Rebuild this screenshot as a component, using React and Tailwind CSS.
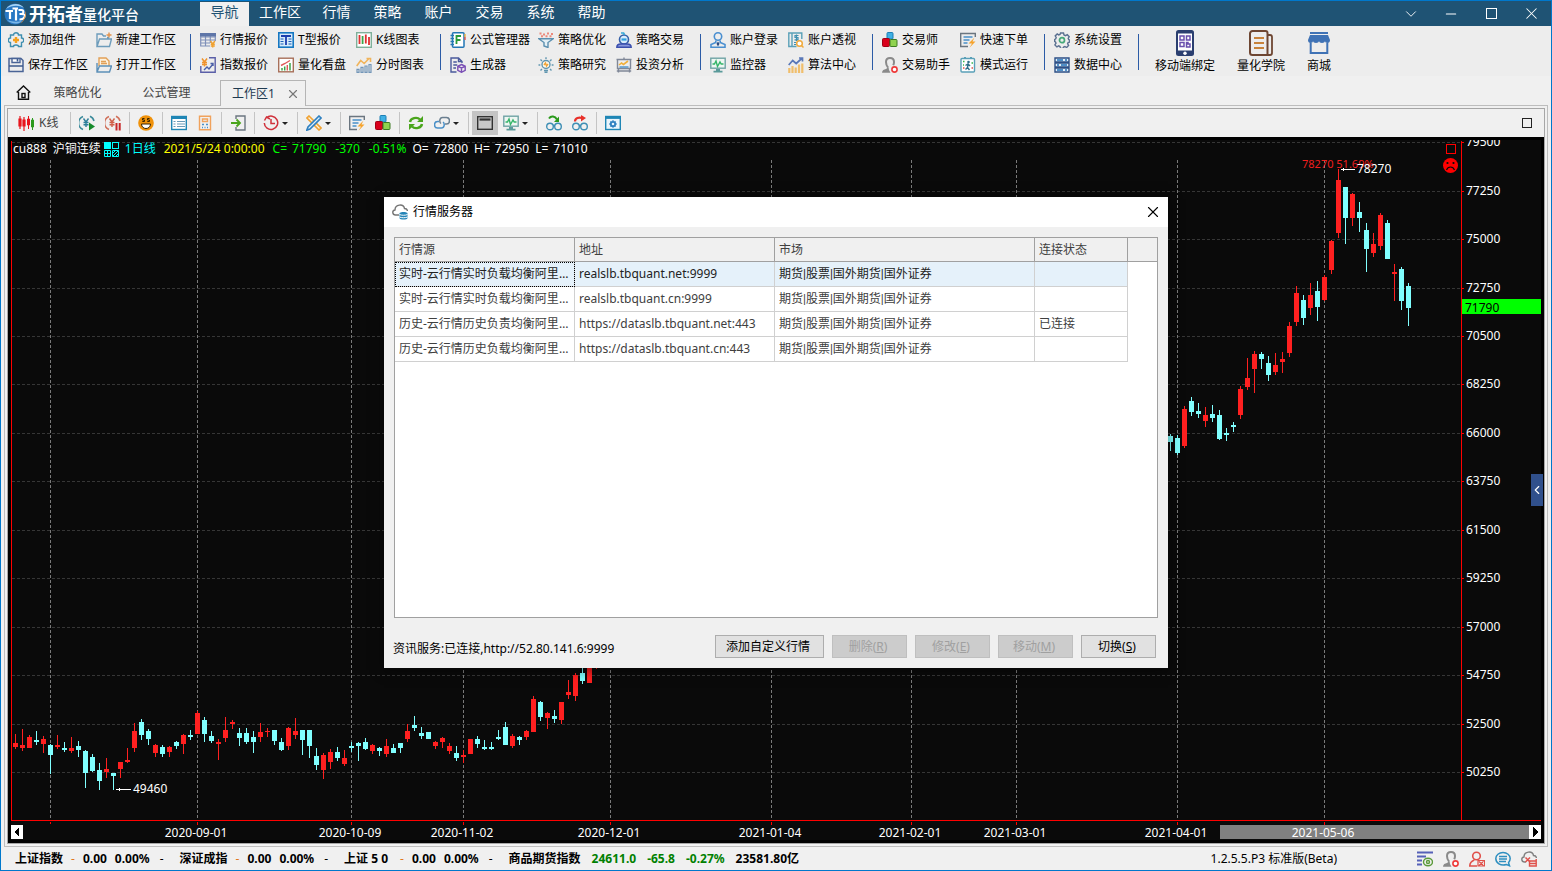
import { useState } from "react";
import { ChevronDown, ChevronLeft, Minus, X } from "lucide-react";

function Svg({ children, size = "h-4 w-4", box = "0 0 16 16" }) {
  return (
    <svg viewBox={box} className={`${size} shrink-0`} fill="none" strokeWidth="1.4" aria-hidden="true">
      {children}
    </svg>
  );
}

const blocks = (
  <>
    <rect x="5" y="0.5" width="6" height="6.5" rx="1" fill="#3fb0e4" stroke="#1d7fb5" strokeWidth="1" />
    <rect x="0.5" y="6.5" width="7" height="8" rx="1" fill="#d9001b" stroke="#a00014" strokeWidth="1" />
    <rect x="8" y="7.5" width="7" height="7" rx="1" fill="#8fd24e" stroke="#3c7a22" strokeWidth="1" />
  </>
);

const quickOrder = (
  <>
    <path d="M8 14.5H.7V1.5h14.6V5" stroke="#6b7680" />
    <path d="M3.5 5h9M3.5 8h6M3.5 11h4" stroke="#4a90c8" />
    <path d="M14.5 5.5 8.5 11.5H12l-2.500 4.200 6-6.200h-3z" fill="#f6a32c" />
  </>
);

const monitor = (
  <>
    <rect x="0.8" y="1.2" width="14.4" height="10" fill="#eef6f2" stroke="#6fa3a5" />
    <path d="M2.5 7h2L6 4l1.500 5.500L10 5l1.200 2h2.300" stroke="#35b56a" />
    <path d="M6 12h4v2H6zM3.500 13.700h9v1.700h-9z" fill="#5a9a9a" />
  </>
);

const agent = (
  <>
    <path d="M6 10.500C4.200 8.500 4 6.500 4 5c0-2.500 1.600-4 4-4s4 1.500 4 4c0 1-.1 2-.8 3.200" stroke="#8a8a8a" strokeWidth="2" />
    <path d="M0 15.700c0-2.700 2-3.300 4-3.800L6.500 10l.5 3 1.500 2.700z" fill="#8a8a8a" />
    <circle cx="12.5" cy="12.500" r="2.600" fill="#fff" stroke="#ef3b3b" strokeWidth="1.600" />
  </>
);

const icons = {
  addWidget: (
    <>
      <path d="M5.500 3c0-3 5-3 5 0h3v3c3 0 3 4.500 0 4.500v4h-3c0-2-5-2-5 0h-3v-4c-3 0-3-4.500 0-4.500V3z" stroke="#3f8fb0" />
      <path d="M8 5v6M5 8h6" stroke="#f5a01c" strokeWidth="2.400" />
    </>
  ),
  newSpace: (
    <>
      <path d="M1 14.500V2h5l1.500 2H10M1 14.500 3.500 7h12l-2 7.500zM11 5.500h1.500V7" stroke="#6d9cbb" />
      <path d="M13 .5v5M10.500 3h5" stroke="#e2924b" />
    </>
  ),
  save: (
    <>
      <path d="M1 1.500h12l2 2v11H1z" stroke="#4a6496" strokeWidth="1.500" />
      <path d="M4 1.500h8v4H4z" fill="#fff" stroke="#4a6496" />
      <path d="M1 9h14M9.500 2v2.500" stroke="#3d5a8c" strokeWidth="1.600" />
    </>
  ),
  open: (
    <>
      <path d="M3 9V1h7l3 3v5" fill="#fdf1dd" stroke="#e2a057" />
      <path d="M5 4.500h5M5 6.500h6" stroke="#e2a057" />
      <path d="M1 6v9h12.500L15.500 9H3.500L1 15" stroke="#5c90b8" />
    </>
  ),
  quoteTable: (
    <>
      <path d="M.7 1.500V14H10M.7 5h14.600M.7 8h14.600M.7 11H10M5.500 1.500V14M10.300 1.500V11M15.300 1.500V9" stroke="#7f90b8" strokeWidth="1.200" />
      <path d="M0 1h16v3.500H0z" fill="#5f76a8" />
      <path d="m10.500 9 2.200 3 2.200-3M12.700 12v3.500M10.800 12.300h4M10.800 14h4" stroke="#f0a232" />
    </>
  ),
  tQuote: (
    <>
      <rect x="0.800" y="0.800" width="14.400" height="14.400" fill="#d7ebfa" stroke="#1577c2" strokeWidth="1.600" />
      <path d="M3 4h10M8 4v9" stroke="#1b3fae" strokeWidth="1.800" />
      <path d="M2.500 7h3M2.500 9.500h3M2.500 12h3M10.500 7h3M10.500 9.500h3M10.500 12h3" stroke="#1b5fb8" strokeWidth="1.200" />
    </>
  ),
  kChart: (
    <>
      <rect x="0.700" y="0.700" width="14.600" height="14.600" fill="#fff" stroke="#7fb09a" />
      <path d="M3.500 3v9M13 5v8" stroke="#e03030" strokeWidth="1.800" />
      <path d="M9.800 2.500v9" stroke="#e03030" strokeWidth="1.800" />
      <path d="M6.600 4v8" stroke="#3aa54a" strokeWidth="1.800" />
    </>
  ),
  indexQuote: (
    <>
      <path d="M9 .8h6.200v14.400H.8V9" stroke="#5a5fa8" />
      <path d="M2 1.500 4.500 5 7 1.500M4.500 5v4.500M2 5.500h5M2 7.500h5" stroke="#f0932c" strokeWidth="1.500" />
      <path d="m4 13 3-3 2 2 4-5M10.500 6.500H13V9" stroke="#4a5fa8" />
    </>
  ),
  quantBoard: (
    <>
      <rect x="0.700" y="1.200" width="14.600" height="13.600" fill="#fff" stroke="#a8705a" />
      <path d="M4 13.500V11M6.700 13.500V9.500M12 13.500V6" stroke="#3aa54a" strokeWidth="1.500" />
      <path d="M9.300 13.500V8M3 8.500 7 6.500l5-3" stroke="#e05a5a" />
    </>
  ),
  timeChart: (
    <>
      <path d="m.7 9 4-5.500 3.500 3L13 1.500M10.500 1.500h4V5" stroke="#f0b45c" strokeWidth="1.600" />
      <path d="M1 15.300v-3h2v3zM5 15.300v-5h2v5zM9 15.300V9h2v6.300zM13 15.300V7.500h2v7.800z" stroke="#7396b8" strokeWidth="1.200" />
    </>
  ),
  formula: (
    <>
      <rect x="2.500" y="0.800" width="11.500" height="14.400" rx="1" fill="#fff" stroke="#2277b5" strokeWidth="1.500" />
      <path d="M6.500 12V4h4.500M6.500 8h4" stroke="#2a9a3c" strokeWidth="1.800" />
      <path d="M.5 3.500h3.500M.5 6.500h3.500M.5 9.500h3.500M.5 12.500h3.500" stroke="#2277b5" />
      <path d="M15 2v3" stroke="#f0b03c" />
      <path d="M15 5v3" stroke="#e2524b" />
    </>
  ),
  optimise: (
    <>
      <path d="M1.500 1.500h2M5 2.500h2M9 1.500h2M13 2h2M3 4.300h2M7.500 4.300h2M11.500 4.300h2" stroke="#ec8a7c" strokeWidth="2" />
      <path d="M.8 6.800h14.400L10 10.500v5l-4-1.500v-3.500z" fill="#e4f0f6" stroke="#5c90b0" />
    </>
  ),
  trade: (
    <>
      <circle cx="8" cy="7.500" r="4.500" fill="#d8ecfb" stroke="#3560a8" strokeWidth="1.600" />
      <path d="M5.500 7.500h5" stroke="#2f9fe0" strokeWidth="2.200" />
      <path d="M8 3V.8M5 1h3" stroke="#35a8d8" strokeWidth="1.600" />
      <path d="M.8 15.200c0-2.500 2.500-3.200 4-3.200h6.400c1.500 0 4 .7 4 3.200z" fill="#8a98dc" stroke="#3a4fae" />
    </>
  ),
  generator: (
    <>
      <path d="M6.500 15H1V1h7.500L12 4.500V6M8.500 1v3.500H12M3.300 5h3.500M3.300 8h4M3.300 11H6" stroke="#4a5a9c" />
      <path d="m11.500 7.500 3.700 1.800v4l-3.700 2-3.700-2v-4zM7.800 9.300l3.700 1.700 3.700-1.700M11.500 11v4" stroke="#7a4fb5" />
    </>
  ),
  research: (
    <>
      <circle cx="8" cy="7.500" r="4" fill="#fff7e6" stroke="#6096b0" />
      <path d="M6 13.500h4M6.500 15.300h3M8 .3v1.700M.5 8h1.800M13.700 8h1.800M2.500 2.500 4 4M13.500 2.500 12 4M2.500 13.500 4 12M13.500 13.500 12 12" stroke="#6096b0" />
      <path d="m6 8 1.500-2 1 3L10 7" stroke="#f0a232" />
    </>
  ),
  invest: (
    <>
      <path d="M1.500 2.500h13v9h-13zM.5 2.500h15M8 2.500V.5M2.500 12v3.500M13.500 12v3.500M.8 14h14.400" stroke="#808898" />
      <path d="m3 8 2.500-2 2 1.500L12 4" stroke="#f0b03c" strokeWidth="1.600" />
      <path d="M3.500 10h9" stroke="#4a90c8" />
    </>
  ),
  login: (
    <>
      <circle cx="8" cy="4.500" r="3.700" stroke="#4a8fd0" strokeWidth="1.600" />
      <path d="M5.800 8.500v2L1 12.500v2.700h14v-2.700l-4.800-2v-2" stroke="#4a8fd0" strokeWidth="1.600" />
      <path d="m8 9.500 1.500 2.200L8 14.500l-1.500-2.800z" fill="#2a4a80" />
    </>
  ),
  perspective: (
    <>
      <path d="M8.500 14.500H.8V1h13v6M4 1v13" stroke="#5aa0b8" />
      <path d="M10.500 3.500H7v2h3v2.300H6.500M8.500 2.500v6.500M6 10.500h2M6 12.500h2" stroke="#3f8fb0" strokeWidth="1.200" />
      <circle cx="11.500" cy="11.500" r="2.800" fill="#fff" stroke="#f0a93c" strokeWidth="1.500" />
      <path d="m13.500 13.500 2 2" stroke="#f0a93c" strokeWidth="1.500" />
    </>
  ),
  algo: (
    <>
      <path d="M1.300 16v-5M4.500 16V9M7.700 16v-5.500M11 16V7.500M14.300 16V6.500" stroke="#f0be6c" strokeWidth="2.200" />
      <path d="m.7 8 4-4.500 3.500 3 5.500-5M11 1h3.500v3.500" stroke="#5a78b8" strokeWidth="1.700" />
    </>
  ),
  monitor,
  blocks,
  agent,
  quickOrder,
  modeRun: (
    <>
      <rect x="1" y="1.500" width="13.500" height="13.500" rx="1" fill="#fff" stroke="#5aa0b8" />
      <path d="M4 .8h2M10 .8h2" stroke="#5aa0b8" strokeWidth="2" />
      <circle cx="8.500" cy="5" r="1.300" fill="#2f6f8a" />
      <path d="m5.500 8.500 2.500-1.500 2 2M8 7.500l-.5 3L9.500 13M7.500 10.500l-2 2" stroke="#2f6f8a" />
      <path d="M3 4.500h1.500M11.500 6H13M3 8h1" stroke="#3ab54a" />
      <path d="M11.500 11h1.500M3 11h1.500" stroke="#e2524b" />
    </>
  ),
  settings: (
    <>
      <path d="M6.500 1h3l.5 2 1.500.7 1.800-1 1.900 2-1 1.700.5 1.300 1 .3v2l-1.600.6-.5 1.200 1 1.700-2 2-1.700-1-1.300.5-.6 1.400h-2.500L6 14.500l-1.300-.6-1.800 1-2-2 1.100-1.700-.5-1.200L.7 9.500v-2l1-.8.5-1.200-1-1.600 2-2 1.500 1L6 2.500z" stroke="#5a7090" />
      <circle cx="8" cy="8.200" r="2.500" stroke="#45a878" strokeWidth="1.700" />
    </>
  ),
  dataCenter: (
    <>
      <path d="M1 1h14v4H1zM1 6h14v4H1zM1 11h14v4H1z" fill="#e4f0f8" stroke="#2d4f85" />
      <path d="M3 3h6M3 13h6" stroke="#1e6fb8" strokeWidth="1.500" />
      <path d="M11 3h2M3 8h2M7 8h6M11 13h2" stroke="#1e6fb8" strokeWidth="1.500" />
    </>
  ),
};

const ribbonGroups = [
  [
    { w: "w-[88px]", items: [["addWidget", "添加组件"], ["save", "保存工作区"]] },
    { w: "w-[88px]", items: [["newSpace", "新建工作区"], ["open", "打开工作区"]] },
  ],
  [
    { w: "w-[78px]", items: [["quoteTable", "行情报价"], ["indexQuote", "指数报价"]] },
    { w: "w-[78px]", items: [["tQuote", "T型报价"], ["quantBoard", "量化看盘"]] },
    { w: "w-[78px]", items: [["kChart", "K线图表"], ["timeChart", "分时图表"]] },
  ],
  [
    { w: "w-[88px]", items: [["formula", "公式管理器"], ["generator", "生成器"]] },
    { w: "w-[78px]", items: [["optimise", "策略优化"], ["research", "策略研究"]] },
    { w: "w-[78px]", items: [["trade", "策略交易"], ["invest", "投资分析"]] },
  ],
  [
    { w: "w-[78px]", items: [["login", "账户登录"], ["monitor", "监控器"]] },
    { w: "w-[78px]", items: [["perspective", "账户透视"], ["algo", "算法中心"]] },
  ],
  [
    { w: "w-[78px]", items: [["blocks", "交易师"], ["agent", "交易助手"]] },
    { w: "w-[78px]", items: [["quickOrder", "快速下单"], ["modeRun", "模式运行"]] },
  ],
  [{ w: "w-[78px]", items: [["settings", "系统设置"], ["dataCenter", "数据中心"]] }],
];

function Logo() {
  return (
    <svg viewBox="0 0 24 22" className="h-[22px] w-6" aria-hidden="true">
      <circle cx="11" cy="11" r="10.500" fill="#2878c4" />
      <path d="M2 6C6 0 16-1 20 5c-5-3-12-3-18 1z" fill="#a8d4f4" />
      <path d="M3 17c4 4 11 5 15 1-5 1-10 1-15-1z" fill="#7ab8e8" />
      <path d="M1.500 8H9M6 8v8M8.500 5.500H14M12 5.500v12" stroke="#fff" strokeWidth="2.200" fill="none" />
      <path d="M14.500 7h3c2.500 0 2.500 4 0 4H15.500c5-.5 6 1 5 3s-2.500 2.500-5 2.500" stroke="#fff" strokeWidth="2" fill="none" />
      <path d="M21.500 8c1.500 4-1 10-5 12.500 3-3 5-7.500 5-12.500z" fill="#f08c28" />
    </svg>
  );
}

function TitleBar() {
  const menus = ["行情", "策略", "账户", "交易", "系统", "帮助"];
  return (
    <header className="flex h-[25px] shrink-0 items-stretch bg-[#1f5374] text-sm text-white">
      <div className="flex w-[199px] items-center pl-[3px]">
        <Logo />
        <h1 className="flex items-center whitespace-nowrap pl-px">
          <span className="text-lg font-bold leading-6">开拓者</span>
          <span className="pt-0.5 text-sm font-medium leading-5">量化平台</span>
        </h1>
      </div>
      <nav className="flex">
        <button className="mt-px w-[49px] bg-[#f0f0f0] pb-1 text-[#1f5374]">导航</button>
        <button className="w-[62px] pb-1">工作区</button>
        {menus.map((m) => (
          <button key={m} className="w-[51px] pb-1">{m}</button>
        ))}
      </nav>
      <div className="ml-auto flex">
        <button className="flex w-10 items-center justify-center" aria-label="更多"><ChevronDown size={18} strokeWidth={1.200} /></button>
        <button className="flex w-10 items-center justify-center" aria-label="最小化"><Minus size={16} strokeWidth={1.600} /></button>
        <button className="flex w-10 items-center justify-center" aria-label="最大化"><span className="h-[11px] w-[11px] border border-white" /></button>
        <button className="flex w-10 items-center justify-center" aria-label="关闭"><X size={19} strokeWidth={1.300} /></button>
      </div>
    </header>
  );
}

function BigButton({ label, children }) {
  return (
    <button className="flex flex-col items-center">
      <span className="flex h-[30px] items-center">{children}</span>
      <span className="leading-4">{label}</span>
    </button>
  );
}

function Ribbon() {
  return (
    <div className="flex h-[50px] shrink-0 items-start bg-[#ededed] pl-[7px] pt-px">
      {ribbonGroups.map((cols, i) => (
        <div key={i} className="flex items-start">
          {cols.map((col, j) => (
            <div key={j} className={`flex flex-col ${col.w}`}>
              {col.items.map(([icon, label]) => (
                <button key={label} className="flex h-[25px] items-center gap-1 whitespace-nowrap">
                  <Svg>{icons[icon]}</Svg>
                  {label}
                </button>
              ))}
            </div>
          ))}
          <span className="ml-[6px] mr-[9px] mt-[7px] h-9 w-px bg-[#2b5ba6]" />
        </div>
      ))}
      <div className="flex gap-[22px] pl-[7px] pt-px">
        <BigButton label="移动端绑定">
          <Svg size="h-[26px] w-[18px]" box="0 0 18 26">
            <rect x="0" y="0" width="18" height="26" rx="2.500" fill="#2b3f70" />
            <rect x="2" y="3.500" width="14" height="17" fill="#fff" />
            <path d="M4 6h4v4H4zM10.500 6H14v4h-3.500zM4 12.500h4v4H4zM10.500 12.500H12V14h2v3h-3.500z" stroke="#6a4fae" strokeWidth="1.500" />
            <circle cx="9" cy="23.200" r="1.700" fill="#fff" />
          </Svg>
        </BigButton>
        <BigButton label="量化学院">
          <Svg size="h-[26px] w-6" box="0 0 24 26">
            <path d="M3.500 1h13a2 2 0 0 1 2 2v22h-15A2.500 2.500 0 0 1 1 22.500v-19A2.500 2.500 0 0 1 3.500 1z" stroke="#6e4632" strokeWidth="2" />
            <path d="M19 5h2c1.500 0 2 1 2 2v16c0 1-1 2-2 2h-3" stroke="#6e4632" strokeWidth="1.800" />
            <path d="M5 8h10M5 13h10M5 18h10" stroke="#c8823a" strokeWidth="2" />
          </Svg>
        </BigButton>
        <BigButton label="商城">
          <Svg size="h-6 w-6" box="0 0 24 24">
            <path d="M3 1h18v2H3zM3 4h18l2 5c0 2-1 3-2.500 3S18 11 18 10c0 1.300-1.500 2-3 2s-3-1-3-2c0 1-1.500 2-3 2s-3-.7-3-2c0 1-1 2-2.500 2S1 11 1 9z" fill="#3f72b5" />
            <path d="M3.700 12v10h16.600V12" stroke="#3f72b5" strokeWidth="2" />
          </Svg>
        </BigButton>
      </div>
    </div>
  );
}

function WorkspaceTabs({ active, onChange }) {
  return (
    <div className="relative z-10 -mb-px flex h-[30px] shrink-0 items-end text-[#444]">
      <button className="flex h-full w-[32px] items-center justify-center pl-3 pt-0.5" aria-label="主页">
        <Svg size="h-[15px] w-[15px]" box="0 0 15 15">
          <path d="M.7 7.500 7.500 1l6.800 6.500M2.500 7v7.300h10V7" stroke="#111" />
          <rect x="6" y="8.500" width="3" height="4" stroke="#111" />
        </Svg>
      </button>
      {["策略优化", "公式管理"].map((t) => (
        <button key={t} onClick={() => onChange(t)} className="h-[26px] w-[89px]">{t}</button>
      ))}
      <div className="ml-[9px] flex h-[26px] w-[86px] items-center justify-between border border-b-0 border-[#b5b5b5] bg-[#f0f0f0] pl-[11px] pr-[5px]">
        <button onClick={() => onChange("工作区1")} aria-pressed={active === "工作区1"} className="text-[#1f3a50]">工作区1</button>
        <button aria-label="关闭工作区1"><X size={14} strokeWidth={2} className="text-[#777]" /></button>
      </div>
    </div>
  );
}

const Sep = () => <span className="mx-[3px] h-[22px] w-px shrink-0 bg-[#c4c4c4]" />;

function Tool({ label, children, menu, pressed }) {
  return (
    <button
      aria-label={label}
      className={`flex h-6 shrink-0 items-center ${menu ? "w-9 pl-[5px]" : "w-[26px] justify-center"} ${pressed ? "bg-[#c4c4c4]" : ""}`}
    >
      <Svg>{children}</Svg>
      {menu && (
        <svg viewBox="0 0 6 3" className="ml-[3px] h-[3px] w-[6px]"><path d="M0 0h6L3 3z" fill="#222" /></svg>
      )}
    </button>
  );
}

function Toolbar() {
  return (
    <div className="flex h-7 shrink-0 items-center bg-[#f0f0f0]">
      <button className="flex h-6 w-[59px] items-center gap-[5px] pl-[10px] text-[#444]">
        <Svg>
          <path d="M2 1v13M1 4h2v7H1zM6 2v14M5 5h2v6H5z" stroke="#e8141c" strokeWidth="1.200" fill="#e8141c" />
          <path d="M10.500 1v13M9.500 4h2v6h-2z" stroke="#e8141c" strokeWidth="1" fill="#e8141c" />
          <path d="M14.500 3v12M13.500 5h2v7h-2z" stroke="#2a9a1c" strokeWidth="1" fill="#2a9a1c" />
        </Svg>
        K线
      </button>
      <Sep />
      <Tool label="启动">
        <path d="M4 1.500A7 7 0 0 0 4 14.500M11 1.200A7 7 0 0 1 15 6" stroke="#3a8a9a" strokeWidth="1.500" />
        <path d="M4.500 3.500 7 7l2.500-3.500M7 7v5M4.500 7.500h5M4.500 9.700h5" stroke="#2f7f9a" />
        <path d="M10 7.500v8l6-4z" fill="#168a2a" />
      </Tool>
      <Tool label="暂停">
        <path d="M4 1.500A7 7 0 0 0 4 14.500M11 1.200A7 7 0 0 1 15 6" stroke="#d0705a" strokeWidth="1.500" />
        <path d="M4.500 3.500 7 7l2.500-3.500M7 7v5M4.500 7.500h5M4.500 9.700h5" stroke="#d0604a" />
        <path d="M11.500 8v7.500M14.700 8v7.500" stroke="#c8282a" strokeWidth="2" />
      </Tool>
      <Sep />
      <Tool label="盈利">
        <circle cx="8" cy="8" r="7.800" fill="#f0920a" />
        <path d="M6.500 3.500h-2V5h2v1.500H4.300M11.500 3.500h-2V5h2v1.500H9.300" stroke="#3a2400" strokeWidth="1" />
        <path d="M3.500 9h9c0 6-9 6-9 0z" fill="#fff" stroke="#3a2400" strokeWidth="1" />
      </Tool>
      <Sep />
      <Tool label="列表">
        <rect x="0.700" y="1.500" width="14.600" height="13" fill="#fff" stroke="#1f86b5" />
        <path d="M1 2.800h14" stroke="#1f86b5" strokeWidth="2.400" />
        <path d="M2.500 6.500h2M2.500 9h2M2.500 11.500h2M6 6.500h8M6 9h8M6 11.500h8" stroke="#6a9ab8" strokeWidth="1.200" />
      </Tool>
      <Tool label="计算">
        <path d="M2.500 1.200h11v13.600h-11z" stroke="#f0a25c" />
        <path d="M5.500 4h5v2.500h-5z" stroke="#f0a25c" />
        <path d="M5 9.500h2M9 9.500h2M5 12.500h1M7.500 12.500h1M10 12.500h1" stroke="#4a90c8" />
      </Tool>
      <Sep />
      <Tool label="导入">
        <path d="M6 4V1h9v14H6v-3" stroke="#6b7680" />
        <path d="M1 8h8.500M6.500 4.500 10 8l-3.500 3.500" stroke="#4aa51c" strokeWidth="1.800" />
      </Tool>
      <Sep />
      <Tool label="历史" menu>
        <path d="M3.500 2.800A6.700 6.700 0 1 1 1.300 8" stroke="#d0303a" strokeWidth="1.500" />
        <path d="M1.500 5.500 3.500 2 7 4M8 4v4.500h4" stroke="#d0303a" strokeWidth="1.500" />
      </Tool>
      <Sep />
      <Tool label="画线" menu>
        <path d="M3 1 15 13l-2 2L1 3z" fill="#fdf1dd" stroke="#f0a232" strokeWidth="1.600" />
        <path d="m13 1 2 2L4 14l-3.200 1.200L2 12z" fill="#dceefa" stroke="#2f80c0" strokeWidth="1.600" />
      </Tool>
      <Sep />
      <Tool label="快速下单">{quickOrder}</Tool>
      <Tool label="交易师">{blocks}</Tool>
      <Sep />
      <Tool label="刷新">
        <path d="M2 7C2.500 3 9 1.500 12 4.500M14 9c-.5 4-7 5.500-10 2.500" stroke="#4aa51c" strokeWidth="2.400" />
        <path d="M15 1v6H9zM1 15V9h6z" fill="#4aa51c" />
      </Tool>
      <Tool label="链接" menu>
        <path d="M7 8.500c-2-1.500-1.500-6 1.500-6h4c4 0 4 6.500 0 6.500h-1.500" stroke="#6b7f90" strokeWidth="1.500" />
        <path d="M9 7c2 1.500 1.500 6-1.500 6h-4c-4 0-4-6.500 0-6.500H5" stroke="#4a90c8" strokeWidth="1.500" />
      </Tool>
      <Sep />
      <Tool label="窗口" pressed>
        <rect x="0.700" y="1.700" width="14.600" height="12.600" fill="#c9c9c9" stroke="#333" />
        <path d="M2.500 4.500h11" stroke="#333" strokeWidth="2.200" />
      </Tool>
      <Tool label="监控器" menu>{monitor}</Tool>
      <Sep />
      <Tool label="查找下一个">
        <circle cx="4" cy="11.500" r="3.300" stroke="#3f8fb5" />
        <circle cx="12" cy="11.500" r="3.300" stroke="#3f8fb5" />
        <path d="M7 10.500h2" stroke="#3f8fb5" />
        <path d="M3 3.500c2-3 6-2.500 8 1" stroke="#2a9a1c" strokeWidth="2" />
        <path d="M13 1.500V7H8z" fill="#2a9a1c" />
      </Tool>
      <Tool label="查找上一个">
        <circle cx="4" cy="11.500" r="3.300" stroke="#3f8fb5" />
        <circle cx="12" cy="11.500" r="3.300" stroke="#3f8fb5" />
        <path d="M7 10.500h2" stroke="#3f8fb5" />
        <path d="M3 6.500c0-3.500 4-4.500 7-3.500" stroke="#e8302a" strokeWidth="2.200" />
        <path d="M9 0v6.500L14 3z" fill="#e8302a" />
      </Tool>
      <Sep />
      <Tool label="窗口设置">
        <rect x="0.700" y="1.500" width="14.600" height="13" fill="#eaf5fc" stroke="#1f86b5" />
        <path d="M1 2.800h14" stroke="#1f86b5" strokeWidth="2.200" />
        <circle cx="8" cy="9" r="2.200" stroke="#2f80c0" strokeWidth="1.800" />
        <path d="M8 5.300v1M8 11.700v1M4.300 9h1M10.700 9h1M5.400 6.400l.8.800M9.800 10.800l.8.800M10.600 6.400l-.8.800M6.200 10.800l-.8.800" stroke="#2f80c0" />
      </Tool>
      <button className="ml-auto mr-3 flex" aria-label="还原"><span className="h-[10px] w-[10px] border border-[#222]" /></button>
    </div>
  );
}

// [direction, high, body top, body bottom, low], one entry per trading day
const early = [
  ["r", 734, 743, 747, 749], ["r", 729, 745, 748, 751], ["r", 735, 737, 748, 748], ["c", 731, 740, 742, 745],
  ["r", 736, 739, 744, 753], ["c", 744, 745, 755, 774], ["r", 735, 745, 747, 749], ["c", 742, 748, 750, 752],
  ["r", 737, 748, 751, 753], ["c", 741, 746, 750, 757], ["c", 750, 751, 773, 788], ["c", 754, 757, 771, 772],
  ["c", 763, 770, 781, 790], ["r", 758, 769, 772, 778], ["c", 773, 773, 776, 790], ["r", 762, 762, 769, 778],
  ["r", 748, 760, 762, 763], ["r", 723, 731, 748, 752], ["c", 719, 722, 735, 740], ["c", 729, 731, 739, 745],
  ["r", 744, 745, 753, 757], ["c", 745, 747, 754, 757], ["r", 746, 747, 752, 757], ["c", 741, 742, 746, 749],
  ["r", 734, 735, 744, 754], ["c", 730, 735, 737, 740], ["r", 711, 713, 734, 734], ["c", 717, 720, 734, 742],
  ["c", 731, 736, 741, 743], ["r", 739, 742, 744, 760], ["r", 717, 730, 738, 742], ["r", 720, 722, 724, 729],
  ["c", 728, 733, 738, 746], ["c", 728, 733, 742, 744], ["c", 731, 737, 742, 753], ["r", 723, 732, 737, 742],
  ["r", 728, 731, 732, 737], ["c", 730, 730, 741, 745], ["c", 738, 742, 750, 751], ["r", 727, 728, 746, 750],
  ["r", 718, 731, 735, 739], ["c", 730, 730, 740, 755], ["c", 730, 730, 746, 758], ["c", 748, 756, 765, 770],
  ["r", 753, 755, 770, 779], ["r", 749, 752, 762, 769], ["c", 747, 752, 758, 761], ["r", 750, 758, 764, 766],
  ["c", 742, 746, 748, 752], ["c", 742, 743, 746, 761], ["c", 738, 742, 749, 750], ["r", 744, 745, 751, 754],
  ["c", 747, 748, 751, 756], ["r", 739, 746, 754, 757], ["c", 744, 748, 753, 753], ["c", 743, 743, 748, 753],
  ["r", 724, 731, 739, 742], ["c", 716, 725, 728, 731], ["c", 727, 733, 736, 739], ["c", 732, 732, 739, 739],
  ["r", 741, 742, 746, 749], ["r", 737, 738, 742, 748], ["r", 743, 746, 751, 754], ["c", 746, 753, 758, 761],
  ["r", 750, 755, 757, 763], ["r", 739, 739, 754, 754], ["c", 736, 739, 744, 748], ["c", 740, 747, 749, 750],
  ["c", 742, 747, 749, 750], ["c", 730, 737, 739, 740], ["c", 722, 727, 745, 745], ["r", 734, 736, 746, 748],
  ["c", 736, 737, 740, 745], ["r", 730, 731, 737, 740], ["r", 696, 699, 732, 732], ["c", 701, 702, 717, 721],
  ["r", 712, 713, 718, 729], ["c", 710, 716, 719, 723], ["r", 702, 702, 720, 724], ["r", 680, 692, 695, 699],
  ["r", 673, 675, 696, 701], ["c", 668, 673, 681, 684], ["r", 650, 655, 683, 683], ["r", 640, 650, 666, 669],
];
const late = [
  ["c", 434, 436, 442, 451], ["c", 435, 438, 453, 455], ["r", 406, 409, 446, 448], ["c", 397, 401, 412, 416],
  ["c", 403, 411, 414, 418], ["r", 407, 415, 421, 427], ["c", 405, 414, 418, 422], ["c", 410, 415, 439, 440],
  ["c", 428, 433, 435, 441], ["c", 422, 425, 427, 432], ["r", 386, 389, 415, 419], ["r", 358, 378, 387, 390],
  ["r", 351, 354, 369, 393], ["c", 352, 354, 359, 369], ["c", 356, 363, 375, 381], ["r", 353, 365, 372, 375],
  ["r", 352, 359, 362, 373], ["r", 322, 326, 353, 357], ["r", 286, 293, 322, 326], ["c", 295, 300, 318, 325],
  ["r", 283, 295, 308, 315], ["c", 281, 291, 307, 321], ["r", 275, 277, 300, 301], ["r", 240, 241, 270, 274],
  ["r", 169, 180, 233, 238], ["c", 187, 187, 218, 244], ["r", 193, 194, 218, 226], ["c", 202, 212, 218, 232],
  ["c", 223, 230, 249, 272], ["r", 233, 244, 253, 257], ["r", 213, 215, 246, 250], ["c", 220, 223, 259, 259],
  ["r", 264, 272, 274, 301], ["c", 267, 269, 301, 310], ["c", 283, 286, 308, 326],
];

const prices = [
  [79500, 142], [77250, 191], [75000, 239], [72750, 288], [70500, 336], [68250, 384], [66000, 433],
  [63750, 481], [61500, 530], [59250, 578], [57000, 627], [54750, 675], [52500, 724], [50250, 772],
];

const dates = [
  ["", 50], ["2020-09-01", 197], ["2020-10-09", 351], ["2020-11-02", 463], ["2020-12-01", 610], ["2021-01-04", 771],
  ["2021-02-01", 911], ["2021-03-01", 1016], ["2021-04-01", 1177], ["2021-05-06", 1324],
];

function Candle({ x, bar }) {
  const [dir, high, top, bottom, low] = bar;
  return (
    <g fill={dir === "r" ? "#ff2020" : "#80ffff"}>
      <rect x={x} y={high} width="1" height={low - high} />
      <rect x={x - 2} y={top} width="5" height={Math.max(bottom - top, 1)} />
    </g>
  );
}

function PriceChart() {
  return (
    <svg className="block h-full w-full" viewBox="8 137 1536 706" preserveAspectRatio="xMinYMin meet" fontSize="12" shapeRendering="crispEdges" role="img" aria-label="沪铜连续 日线">
      <defs>
        <clipPath id="plot"><rect x="8" y="140" width="1533" height="700" /></clipPath>
      </defs>
      <rect x="11" y="140" width="1530" height="700" fill="#0a0a0a" />
      <g stroke="#363636" strokeDasharray="3 2">
        {prices.map(([p, y]) => <line key={p} x1="12" x2="1461" y1={y + 0.5} y2={y + 0.5} />)}
      </g>
      <g stroke="#7a7a7a" strokeDasharray="3 2">
        {dates.map(([d, x]) => <line key={x} x1={x + 0.5} x2={x + 0.5} y1="160" y2="818" />)}
      </g>
      <g fill="#ff0000">
        <rect x="11" y="141" width="1" height="680" />
        <rect x="1461" y="141" width="1" height="680" />
        <rect x="11" y="820" width="1530" height="1" />
        {prices.map(([p, y]) => <rect key={p} x="1461" y={y} width="3" height="1" />)}
        {dates.map(([d, x]) => <rect key={x} x={x} y="822" width="1" height={d ? 3 : 2} />)}
      </g>

      {early.map((bar, i) => <Candle key={i} x={15 + i * 7} bar={bar} />)}
      {late.map((bar, i) => <Candle key={i} x={1170 + i * 7} bar={bar} />)}

      <rect x="1220" y="825" width="309" height="14" fill="#808080" />
      <rect x="11" y="825" width="12" height="14" fill="#fff" />
      <path d="M19 827v10l-5-5z" fill="#000" />
      <rect x="1529" y="825" width="12" height="14" fill="#fff" />
      <path d="M1533 827v10l5-5z" fill="#000" />

      <g fill="#fff" clipPath="url(#plot)">
        {prices.map(([p, y]) => <text key={p} x="1466" y={y + 4}>{p}</text>)}
      </g>
      <g fill="#fff" textAnchor="middle">
        {dates.map(([d, x]) => d && <text key={d} x={x - 1} y="837">{d}</text>)}
      </g>
      <rect x="1462" y="299" width="79" height="15" fill="#00ff00" />
      <text x="1465" y="312" fill="#000">71790</text>

      <text x="1302" y="168" fill="#f01e1e" fontSize="11">78270 51.69%</text>
      <text x="1357" y="173" fill="#fff">78270</text>
      <path d="M1341 169.500h14M1343.500 168v3" stroke="#fff" />
      <text x="133" y="793" fill="#fff">49460</text>
      <path d="M116 789.500h15M119.500 788v3" stroke="#fff" />

      <rect x="1446.500" y="144.500" width="9" height="9" stroke="#ff0000" fill="none" />
      <g shapeRendering="auto">
        <circle cx="1450.500" cy="165.500" r="7.500" fill="#ff0000" />
        <path d="M1446.500 170c1.500-4 6.500-4 8 0" stroke="#0a0a0a" fill="none" strokeWidth="1.200" />
        <circle cx="1447.500" cy="163" r="1.100" fill="#0a0a0a" />
        <circle cx="1453.500" cy="163" r="1.100" fill="#0a0a0a" />
      </g>
    </svg>
  );
}

function Reading({ name, value }) {
  return (
    <span className="flex gap-[5px]">
      <span>{name}=</span>
      <span>{value}</span>
    </span>
  );
}

function QuoteLine() {
  return (
    <div className="absolute left-[5px] top-[3px] flex h-[18px] items-center whitespace-nowrap text-white">
      <span>cu888</span>
      <span className="ml-[6px]">沪铜连续</span>
      <svg viewBox="0 0 15 15" className="ml-[3px] h-[15px] w-[15px]" fill="none" stroke="#00ffff">
        <rect x="0" y="0" width="7" height="7" fill="#00ffff" stroke="none" />
        <rect x="8.500" y="0.500" width="6" height="6" />
        <path d="M.5 8.500h6v6h-6zM3.500 8.500v6M.5 11.500h6M8.500 8.500h6v6h-6zM8.500 14.500l6-6M8.500 11.500l3-3M11.500 14.500l3-3" />
      </svg>
      <span className="ml-[6px] text-[#00ffff]">1日线</span>
      <span className="ml-2 text-[#ffff00]">2021/5/24 0:00:00</span>
      <div className="ml-2 flex gap-[9px] text-[#00ff00]">
        <Reading name="C" value="71790" />
        <span>-370</span>
        <span>-0.51%</span>
      </div>
      <div className="ml-[6px] flex gap-[6px]">
        <Reading name="O" value="72800" />
        <Reading name="H" value="72950" />
        <Reading name="L" value="71010" />
      </div>
    </div>
  );
}

const servers = [
  ["实时-云行情实时负载均衡阿里云", "realslb.tbquant.net:9999", "期货|股票|国外期货|国外证券", ""],
  ["实时-云行情实时负载均衡阿里云", "realslb.tbquant.cn:9999", "期货|股票|国外期货|国外证券", ""],
  ["历史-云行情历史负责均衡阿里云", "https://dataslb.tbquant.net:443", "期货|股票|国外期货|国外证券", "已连接"],
  ["历史-云行情历史负载均衡阿里云", "https://dataslb.tbquant.cn:443", "期货|股票|国外期货|国外证券", ""],
];

function DialogButton({ children, shortcut, disabled, wide }) {
  return (
    <button
      disabled={disabled}
      className={`h-[23px] border pr-[3px] ${wide ? "w-[109px]" : "w-[75px]"} ${disabled ? "border-[#bfbfbf] bg-[#cccccc] text-[#a0a0a0]" : "border-[#adadad] bg-[#e1e1e1] text-black"}`}
    >
      {children}
      {shortcut && <>(<u>{shortcut}</u>)</>}
    </button>
  );
}

function ServerDialog() {
  const [selected, setSelected] = useState(0);
  return (
    <section role="dialog" aria-label="行情服务器" className="absolute left-1/2 top-[196px] z-20 w-[784px] -translate-x-1/2 bg-[#f0f0f0] shadow-[0_2px_12px_rgba(0,0,0,0.5)]">
      <div className="flex h-[30px] items-center bg-white px-[6px] pb-px">
        <span className="flex pl-0.5">
          <Svg>
            <path d="M7 11H3.500C.2 11-.2 6.500 3 6c0-6 8.500-6.500 9.500-1.500 1.800 0 2.800 1 3 2.500" stroke="#757575" />
            <path d="M7.500 9.500c0-2 8-2 8 0V14c0 2-8 2-8 0z" fill="#2585b8" />
            <path d="M7.500 10.500c2 1 6 1 8 0M7.500 13c2 1 6 1 8 0" stroke="#fff" strokeWidth="1" />
          </Svg>
        </span>
        <h2 className="pl-[5px]">行情服务器</h2>
        <button className="ml-auto" aria-label="关闭"><X size={18} strokeWidth={1.500} /></button>
      </div>
      <div className="px-[10px] pt-[10px]">
        <div className="h-[381px] border border-[#a0a0a0] bg-white text-[#404040]">
          <table className="w-full table-fixed border-separate border-spacing-0 text-left">
            <colgroup>
              <col className="w-[180px]" />
              <col className="w-[200px]" />
              <col className="w-[260px]" />
              <col className="w-[93px]" />
              <col />
            </colgroup>
            <thead>
              <tr className="h-6 bg-[#f0f0f0]">
                {["行情源", "地址", "市场", "连接状态"].map((h) => (
                  <th key={h} className="border-b border-r border-[#a0a0a0] px-1 font-normal">{h}</th>
                ))}
                <td className="border-b border-[#a0a0a0]" />
              </tr>
            </thead>
            <tbody>
              {servers.map((row, i) => (
                <tr key={i} onClick={() => setSelected(i)} className="h-[25px]">
                  {row.map((cell, j) => (
                    <td
                      key={j}
                      className={`truncate border-b border-r border-[#d0d0d0] px-1 ${j === 2 ? "font-[Roboto,'Noto_Sans_CJK_SC',sans-serif]" : ""} ${selected === i ? "bg-[#e5f1fa] text-[#222]" : ""} ${selected === i && j === 0 ? "outline-1 -outline-offset-1 outline-dotted outline-black" : ""}`}
                    >
                      {cell}
                    </td>
                  ))}
                  <td />
                </tr>
              ))}
            </tbody>
          </table>
        </div>
      </div>
      <div className="flex items-center gap-2 pb-[10px] pl-[9px] pr-3 pt-[17px]">
        <p className="mr-auto pt-1">资讯服务:已连接,http://52.80.141.6:9999</p>
        <DialogButton wide>添加自定义行情</DialogButton>
        <DialogButton shortcut="R" disabled>删除</DialogButton>
        <DialogButton shortcut="E" disabled>修改</DialogButton>
        <DialogButton shortcut="M" disabled>移动</DialogButton>
        <DialogButton shortcut="S">切换</DialogButton>
      </div>
    </section>
  );
}

function StatusBar() {
  return (
    <footer className="flex h-[23px] shrink-0 items-center whitespace-nowrap pl-[14px] pr-[14px]">
      <div className="flex items-center gap-4 font-bold text-black">
        {["上证指数", "深证成指", "上证 5 0"].map((name) => (
          <div key={name} className="flex items-center gap-2">
            <span className="min-w-12">{name}</span>
            <span className="font-normal text-[#e07820]">-</span>
            <span>0.00</span>
            <span>0.00%</span>
            <span className="pl-0.5 font-normal">-</span>
          </div>
        ))}
        <div className="flex items-center gap-[11px] text-[#008000]">
          <span className="text-black">商品期货指数</span>
          <span>24611.0</span>
          <span>-65.8</span>
          <span>-0.27%</span>
          <span className="text-black">23581.80亿</span>
        </div>
      </div>
      <span className="ml-auto mr-20">1.2.5.5.P3 标准版(Beta)</span>
      <div className="flex gap-[10px]">
        <Svg>
          <path d="M0 1.500h16M0 5.500h9M0 9.500h5M0 13.500h5" stroke="#5560b8" strokeWidth="1.800" />
          <ellipse cx="11" cy="11" rx="4.500" ry="3.700" stroke="#5a9a3a" />
          <circle cx="11" cy="11" r="1.500" stroke="#5a9a3a" />
        </Svg>
        <Svg>{agent}</Svg>
        <Svg>
          <circle cx="7.500" cy="5" r="3.800" stroke="#e0504a" strokeWidth="1.600" />
          <path d="M8 15H.8c0-3.500 2-5 4.500-6" stroke="#e0504a" strokeWidth="1.600" />
          <path d="M9 9.500h6.500V15H9zM10 10.500l4.500 4M14.500 10.500l-4.500 4" stroke="#e0504a" strokeWidth="1.200" />
        </Svg>
        <Svg>
          <path d="M8 1.500c4 0 7.200 2.600 7.200 6 0 2-.7 3-1.700 4.200l1 3-3-1.200C5.500 15.300.8 12 .8 7.500c0-3.400 3.200-6 7.200-6z" stroke="#2f8fc0" strokeWidth="1.500" />
          <path d="M4 5.500h8M4 8h8M4 10.500h7" stroke="#2f8fc0" />
        </Svg>
        <Svg>
          <path d="M5 11H3.500C.2 11-.2 6.500 3 6c0-6 8.500-6.500 9.500-1.500 1.800 0 2.800 1 3 2.500" stroke="#808080" />
          <path d="M4.500 6.500 9 11M9 6.500 4.500 11" stroke="#e0504a" strokeWidth="1.500" />
          <path d="M8.500 10h6.700v5H8.500zM8.500 12.500h6.700M15.200 8v3" stroke="#e0504a" />
        </Svg>
      </div>
    </footer>
  );
}

export default function App() {
  const [tab, setTab] = useState("工作区1");
  return (
    <div className="relative flex h-screen flex-col overflow-hidden border border-[#0078cc] bg-[#f0f0f0] font-['Noto_Sans','Noto_Sans_CJK_SC',sans-serif] text-xs text-black">
      <TitleBar />
      <Ribbon />
      <WorkspaceTabs active={tab} onChange={setTab} />
      <main className="mx-[3px] flex min-h-0 flex-1 flex-col border border-[#bdbdbd] p-[2px]">
        <div className="flex min-h-0 flex-1 flex-col border border-[#a6a6a6]">
          <Toolbar />
          <div className="relative min-h-0 flex-1 bg-black">
            <PriceChart />
            <QuoteLine />
            <button aria-label="展开" className="absolute right-px top-[337px] flex h-8 w-3 items-center justify-center bg-[#30508c] text-white">
              <ChevronLeft size={14} strokeWidth={2} className="shrink-0" />
            </button>
          </div>
        </div>
      </main>
      <StatusBar />
      <ServerDialog />
    </div>
  );
}
